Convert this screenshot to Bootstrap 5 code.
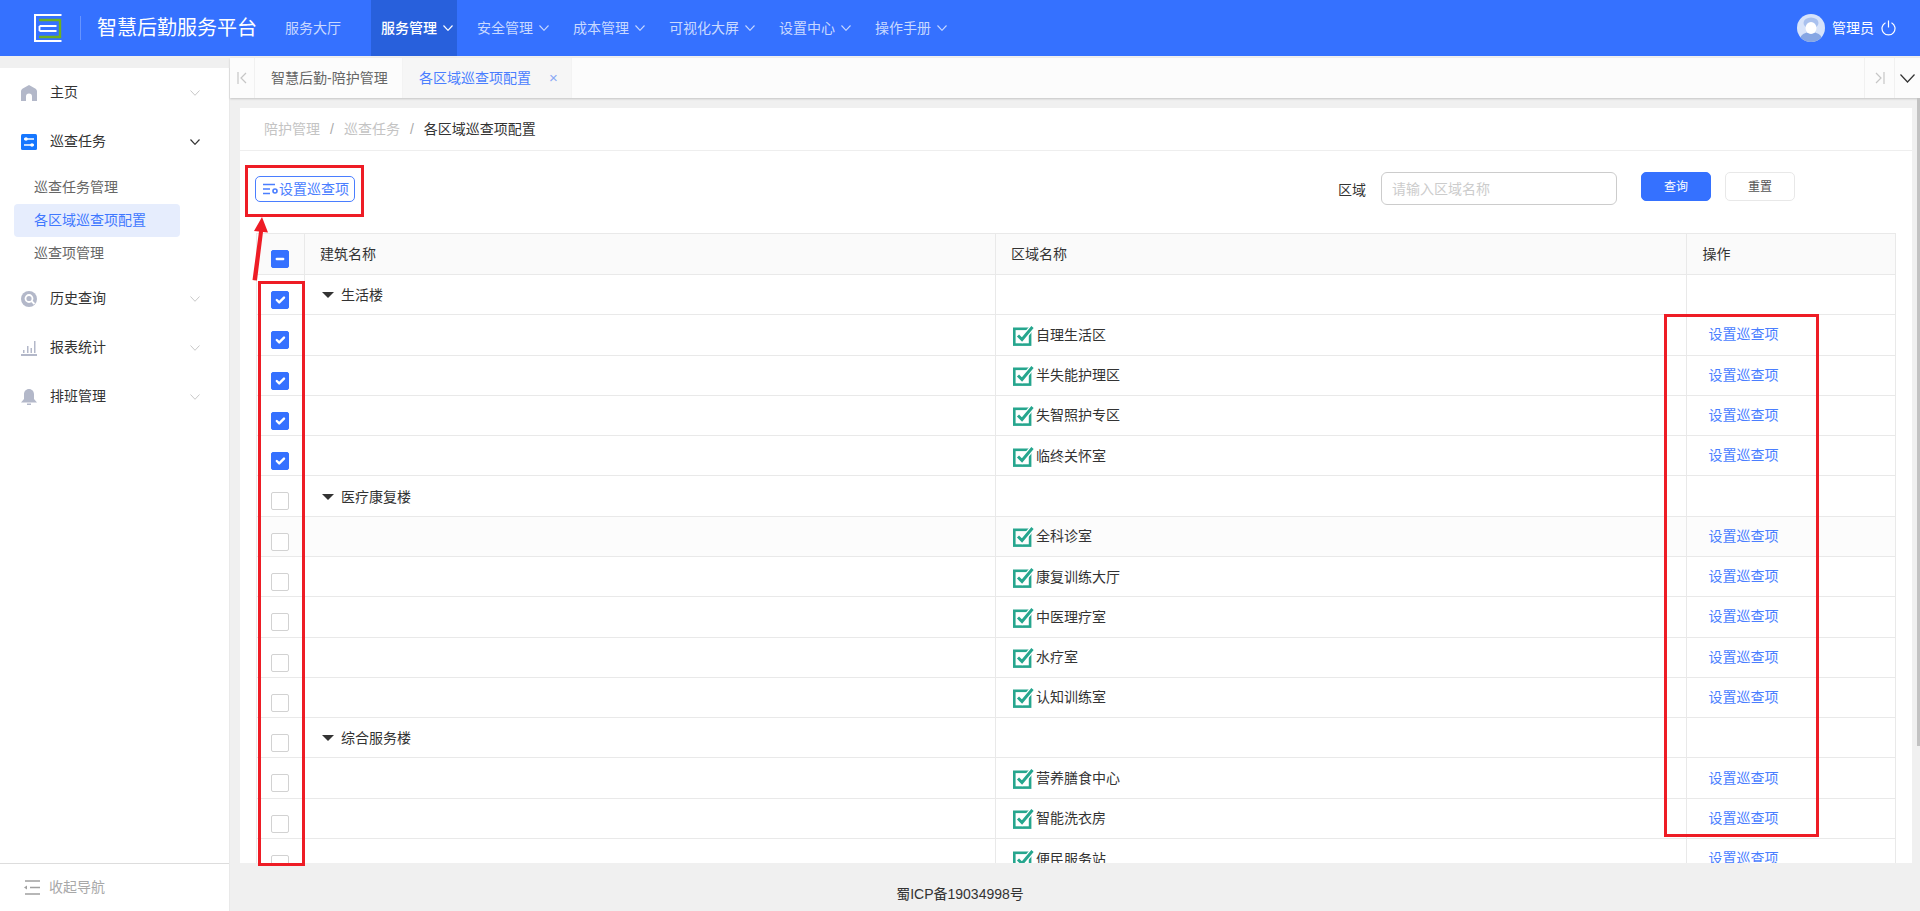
<!DOCTYPE html>
<html lang="zh-CN">
<head>
<meta charset="utf-8">
<title>智慧后勤服务平台</title>
<link href="https://cdn.jsdelivr.net/npm/bootstrap@5.3.0/dist/css/bootstrap.min.css" rel="stylesheet">
<style>
html,body{height:100%}
body{font-family:"Liberation Sans","Noto Sans CJK SC",sans-serif;font-size:14px;color:#333;background:#f0f0f0;overflow:hidden;position:relative}
.topbar{height:56px;background:#3571ff;flex-wrap:nowrap;justify-content:flex-start}
.logo-mark{width:28px;height:28px;margin-left:34px;flex:none}
.logo-sep{width:1px;height:24px;background:rgba(255,255,255,.25);margin:0 16px 0 18px}
.brand-name{font-size:20px;color:#fff;margin:0;padding:0;line-height:56px;width:178px;flex:none}
.topbar .navbar-nav{gap:10px}
.topbar .navbar-nav .nav-link{height:56px;padding:0 4px 0 10px;display:flex;align-items:center;gap:6px;color:#c9d9ff;font-size:14px}
.topbar .navbar-nav .nav-link.lead-link{padding-right:10px;margin-right:10px}
.topbar .navbar-nav .nav-link.active{background:#2860dc;color:#fff;font-weight:500}
.topbar .nav-link svg{width:10px;height:6px;flex:none}
.user-box{margin-left:auto;margin-right:24px;color:#fff;gap:7px}
.user-box svg{flex:none}
.workspace{height:calc(100vh - 56px)}
.side-panel{width:230px;flex:none;margin-top:12px;background:#fff;border-right:1px solid #e9e9e9}
.side-item{height:49px;padding:0 29px 0 21px;color:#333;gap:13px}
.side-item svg.glyph{width:16px;height:16px;flex:none}
.side-item svg.caret-line{width:10px;height:6px;margin-left:auto}
.side-sub{padding:5px 0 4px 14px}
.side-sub a{display:block;width:166px;height:33px;line-height:33px;padding-left:20px;color:#666;text-decoration:none;border-radius:4px}
.side-sub a.on{background:#e6edfd;color:#3f78ff}
.side-foot{height:48px;border-top:1px solid #ddd;padding-left:24px;color:#a8a8a8;gap:9px}
.main-pane{min-width:0}
.tab-strip{height:40px;margin-top:2px;background:#fcfcfc;box-shadow:0 1px 2px rgba(0,0,0,.18);position:relative;z-index:1;flex:none}
.tab-arrow{width:25px;flex:none;border-right:1px solid #f1f1f1;justify-content:center}
.tab-cell{padding-left:16px;color:#666;border-right:1px solid #f3f3f3}
.tab-cell.first{width:148px}
.tab-cell.current{width:169px;background:#f6f6f6;color:#4a7eff;position:relative}
.tab-close{position:absolute;left:146px;top:12px;font-size:15px;color:#8aa9f5;line-height:16px}
.tab-end{margin-left:auto;width:31px;flex:none;border-left:1px solid #f1f1f1;border-right:1px solid #f1f1f1;justify-content:center}
.tab-last{width:25px;flex:none;justify-content:center}
.scroller{flex:1 1 0;min-height:0;overflow:hidden;padding:10px 8px 0 10px}
.sheet{border-radius:0;height:1000px;--bs-card-border-width:0;background:#fff}
.crumbs{height:43px;padding-left:24px;border-bottom:1px solid #eee;--bs-breadcrumb-margin-bottom:0;--bs-breadcrumb-item-padding-x:10px;align-items:center;margin:0}
.crumbs .breadcrumb-item{color:#c4c4c4}
.crumbs .breadcrumb-item+.breadcrumb-item::before{color:#aaa}
.crumbs .breadcrumb-item.active{color:#333}
.tool-row{height:82px;padding:0 0 0 15px;position:relative}
.set-btn{height:26px;width:100px;margin-top:25px;padding:0 0 0 7px;font-size:14px;line-height:1;border:1px solid #4a7eff;color:#4a7eff;border-radius:5px;background:#fff;display:flex;align-items:center;justify-content:flex-start}
.set-btn svg{width:16px;height:12px}
.filter-row{margin-left:auto;margin-right:117px;padding-top:21px;align-items:flex-start}
.filter-label{margin:8px 15px 0 0;color:#333;font-size:14px}
.filter-input{width:236px;height:33px;border:1px solid #ccc;border-radius:6px;padding:0 10px;font-size:14px;box-shadow:none}
.filter-input::placeholder{color:#ccc}
.go-btn{width:70px;height:29px;padding:0;font-size:12px;border-radius:5px;margin-left:24px;background:#3571ff;border-color:#3571ff;color:#fff}
.clear-btn{width:70px;height:29px;padding:0;font-size:12px;border-radius:5px;margin-left:14px;background:#fff;border:1px solid #e8e8e8;color:#555}
.zone-table{width:1640px;margin:0 0 0 16px;table-layout:fixed;--bs-table-border-color:#e9e9e9;--bs-table-color:#333}
.zone-table.table>:not(caption)>*>*{padding:0;height:40.29px;vertical-align:middle;background:#fff;box-shadow:none;color:#333;font-weight:400}
.zone-table.table>thead>tr>th{background:#fafafa;height:41px;padding-left:15px}
.zone-table.table>thead>tr>th.op-head{padding-left:16px}
.zone-table.table>:not(caption)>*>.pick{padding:16px 2px 0 0;vertical-align:top;text-align:center}
.zone-table.table>thead>tr>th.pick{padding:16px 2px 0 0}
.zone-table.table>:not(caption)>*>.lined{padding-left:22px}
.zone-table.table>:not(caption)>*>.area{padding-left:17px}
.zone-table.table>:not(caption)>*>.group-cell{padding:2px 0 0 18px}
.zone-table.table>tbody>tr.soft>*{background:#fcfcfc}
.pick .form-check-input{width:18px;height:18px;margin:0 auto;display:block;border:1px solid #d2d2d2;border-radius:2px;--bs-form-check-bg:#fff}
.pick .form-check-input:checked,.pick .form-check-input:indeterminate{background-color:#3571ff;border-color:#3571ff}
.tri{display:inline-block;border-left:6px solid transparent;border-right:6px solid transparent;border-top:6px solid #333;margin-right:7px;margin-left:-1px;vertical-align:2px}
.area-wrap{gap:2px;line-height:20px}
.area-wrap svg{width:21px;height:20px;flex:none;margin:1px 0 -1px}
.act-link{color:#4a7eff;text-decoration:none}
.page-foot{height:48px;flex:none;padding-right:230px;padding-top:19px;text-align:center;line-height:24px;color:#333;background:#f0f0f0;position:relative}
.thumb{position:absolute;right:0;top:98px;width:3px;height:648px;background:#c2c2c2;z-index:2}
.note-box{position:absolute;border:3.5px solid #ee1c25;z-index:5;pointer-events:none}
.note-a{left:245px;top:165px;width:119px;height:52px}
.note-b{left:258px;top:281px;width:47px;height:585px}
.note-c{left:1664px;top:314px;width:155px;height:523px}
.note-arrow{position:absolute;left:245px;top:210px;width:30px;height:75px;z-index:5}
</style>
</head>
<body>
<svg width="0" height="0" class="position-absolute" aria-hidden="true">
  <symbol id="tick-box" viewBox="0 0 21 20" fill="none">
    <rect x="1.300" y="2.800" width="15.800" height="15.800" stroke="#26a68e" stroke-width="2.600"/>
    <path d="m5 9.500 4 4L19.500 1" stroke="#fff" stroke-width="5.500"/>
    <path d="m5 9.500 4 4L19.500 1" stroke="#26a68e" stroke-width="3"/>
  </symbol>
</svg>
<nav class="navbar navbar-expand p-0 topbar">
  <svg class="logo-mark" viewBox="0 0 28 28" fill="none">
    <path d="M27.500 1H1v26h26.500" stroke="#fff" stroke-width="2"/>
    <path d="M5 6h21v17H5" stroke="#6fb01e" stroke-width="2.400"/>
    <path d="M5.500 12h17M5.500 17h17M5.500 12v5" stroke="#fff" stroke-width="1.800"/>
  </svg>
  <span class="logo-sep"></span>
  <span class="navbar-brand brand-name">智慧后勤服务平台</span>
  <ul class="navbar-nav">
    <li class="nav-item"><a class="nav-link lead-link" href="#">服务大厅</a></li>
    <li class="nav-item"><a class="nav-link active" href="#">服务管理<svg viewBox="0 0 10 6" fill="none" stroke="#fff" stroke-width="1.200"><path d="M.5.500 5 5.300 9.500.5"/></svg></a></li>
    <li class="nav-item"><a class="nav-link" href="#">安全管理<svg viewBox="0 0 10 6" fill="none" stroke="#c9d9ff" stroke-width="1.100"><path d="M.5.500 5 5.300 9.500.5"/></svg></a></li>
    <li class="nav-item"><a class="nav-link" href="#">成本管理<svg viewBox="0 0 10 6" fill="none" stroke="#c9d9ff" stroke-width="1.100"><path d="M.5.500 5 5.300 9.500.5"/></svg></a></li>
    <li class="nav-item"><a class="nav-link" href="#">可视化大屏<svg viewBox="0 0 10 6" fill="none" stroke="#c9d9ff" stroke-width="1.100"><path d="M.5.500 5 5.300 9.500.5"/></svg></a></li>
    <li class="nav-item"><a class="nav-link" href="#">设置中心<svg viewBox="0 0 10 6" fill="none" stroke="#c9d9ff" stroke-width="1.100"><path d="M.5.500 5 5.300 9.500.5"/></svg></a></li>
    <li class="nav-item"><a class="nav-link" href="#">操作手册<svg viewBox="0 0 10 6" fill="none" stroke="#c9d9ff" stroke-width="1.100"><path d="M.5.500 5 5.300 9.500.5"/></svg></a></li>
  </ul>
  <div class="d-flex align-items-center user-box">
    <svg width="28" height="28" viewBox="0 0 28 28"><defs><clipPath id="av"><circle cx="14" cy="14" r="14"/></clipPath></defs><circle cx="14" cy="14" r="14" fill="#d7e3fa"/><g clip-path="url(#av)"><ellipse cx="14" cy="9" rx="7.500" ry="5.500" fill="#a9c1ee"/><ellipse cx="14" cy="25" rx="11" ry="7" fill="#86a6e3"/><ellipse cx="14" cy="14" rx="5.500" ry="6" fill="#fff"/></g></svg>
    <span>管理员</span>
    <svg width="15" height="16" viewBox="0 0 15 16" fill="none" stroke="#fff" stroke-width="1.200"><path d="M4.500 2.700a6.500 6.500 0 1 0 6 0M7.500.5v7"/></svg>
  </div>
</nav>

<div class="d-flex workspace">
  <aside class="side-panel d-flex flex-column">
    <div class="flex-grow-1">
      <div class="d-flex align-items-center side-item">
        <svg class="glyph" viewBox="0 0 16 16" fill="#b3b8c9"><path d="M8 0 1.800 3.600C.8 4.200 0 5.400 0 6.600V16h5v-4.500a3 3 0 0 1 6 0V16h5V6.600c0-1.200-.8-2.400-1.800-3z"/></svg>
        <span>主页</span>
        <svg class="caret-line" viewBox="0 0 10 6" fill="none" stroke="#c8c8c8"><path d="M.5.500 5 5.300 9.500.5"/></svg>
      </div>
      <div class="d-flex align-items-center side-item">
        <svg class="glyph" viewBox="0 0 16 16"><rect width="16" height="16" rx="1.500" fill="#1677ff"/><path d="M3 5h10M3 11h10" stroke="#fff" stroke-width="1.500"/><circle cx="5" cy="5" r="1.800" fill="#fff"/><circle cx="11" cy="11" r="1.800" fill="#fff"/></svg>
        <span>巡查任务</span>
        <svg class="caret-line" viewBox="0 0 10 6" fill="none" stroke="#333" stroke-width="1.200"><path d="M.5.500 5 5.300 9.500.5"/></svg>
      </div>
      <div class="side-sub">
        <a href="#">巡查任务管理</a>
        <a href="#" class="on">各区域巡查项配置</a>
        <a href="#">巡查项管理</a>
      </div>
      <div class="d-flex align-items-center side-item">
        <svg class="glyph" viewBox="0 0 16 16" fill="none"><circle cx="8" cy="8" r="8" fill="#b3b8c9"/><circle cx="8" cy="7.500" r="3.500" stroke="#fff" stroke-width="1.800"/><path d="m10.500 10 3 3" stroke="#fff" stroke-width="1.800"/></svg>
        <span>历史查询</span>
        <svg class="caret-line" viewBox="0 0 10 6" fill="none" stroke="#c8c8c8"><path d="M.5.500 5 5.300 9.500.5"/></svg>
      </div>
      <div class="d-flex align-items-center side-item">
        <svg class="glyph" viewBox="0 0 16 16" fill="#b3b8c9"><path d="M0 14h18v2H0zM2 10h1.500v3H2zM6 6h1.500v7H6zM9.500 8H11v5H9.500zM13 1h1.500v12H13z"/></svg>
        <span>报表统计</span>
        <svg class="caret-line" viewBox="0 0 10 6" fill="none" stroke="#c8c8c8"><path d="M.5.500 5 5.300 9.500.5"/></svg>
      </div>
      <div class="d-flex align-items-center side-item">
        <svg class="glyph" viewBox="0 0 16 16" fill="#b3b8c9"><path d="M8 0c3 0 5 2.300 5 5.500V10l3 3.500H0L3 10V5.500C3 2.300 5 0 8 0zM6 14.500h4V16H6z"/></svg>
        <span>排班管理</span>
        <svg class="caret-line" viewBox="0 0 10 6" fill="none" stroke="#c8c8c8"><path d="M.5.500 5 5.300 9.500.5"/></svg>
      </div>
    </div>
    <div class="d-flex align-items-center side-foot">
      <svg width="16" height="15" viewBox="0 0 16 15" fill="none" stroke="#a0a0a0" stroke-width="1.500"><path d="M1 1h15M6 7.500h10M1 14h15"/><path d="M0 7.500 3 5.500v4z" fill="#a0a0a0" stroke="none"/></svg>
      <span>收起导航</span>
    </div>
  </aside>

  <main class="main-pane flex-grow-1 d-flex flex-column">
    <div class="d-flex tab-strip">
      <div class="d-flex align-items-center tab-arrow">
        <svg width="10" height="12" viewBox="0 0 10 12" fill="none" stroke="#c6c6c6" stroke-width="1.200"><path d="M1 0v12M9 1 4 6l5 5"/></svg>
      </div>
      <div class="d-flex align-items-center tab-cell first">智慧后勤-陪护管理</div>
      <div class="d-flex align-items-center tab-cell current">各区域巡查项配置<span class="tab-close">×</span></div>
      <div class="d-flex align-items-center tab-end">
        <svg width="10" height="12" viewBox="0 0 10 12" fill="none" stroke="#c6c6c6" stroke-width="1.200"><path d="M9 0v12M1 1l5 5-5 5"/></svg>
      </div>
      <div class="d-flex align-items-center tab-last">
        <svg width="15" height="9" viewBox="0 0 15 9" fill="none" stroke="#333" stroke-width="1.200"><path d="m.5.500 7 7.500 7-7.500"/></svg>
      </div>
    </div>
    <div class="scroller">
      <div class="card sheet">
        <nav aria-label="breadcrumb">
          <ol class="breadcrumb crumbs">
            <li class="breadcrumb-item">陪护管理</li>
            <li class="breadcrumb-item">巡查任务</li>
            <li class="breadcrumb-item active" aria-current="page">各区域巡查项配置</li>
          </ol>
        </nav>
        <div class="d-flex tool-row">
          <button type="button" class="btn set-btn">
            <svg viewBox="0 0 16 12" fill="none" stroke="#4a7eff" stroke-width="1.300"><path d="M0 1.500h12M0 6h7M0 10.500h7"/><circle cx="12" cy="8" r="2" stroke-width="1.600"/></svg>设置巡查项
          </button>
          <div class="d-flex filter-row">
            <label class="form-label filter-label" for="qz">区域</label>
            <input id="qz" class="form-control filter-input" type="text" placeholder="请输入区域名称">
            <button type="button" class="btn go-btn">查询</button>
            <button type="button" class="btn clear-btn">重置</button>
          </div>
        </div>
        <table class="table table-bordered zone-table">
          <colgroup><col style="width:48px"><col style="width:691px"><col style="width:690.500px"><col></colgroup>
          <thead>
            <tr>
              <th class="pick"><input class="form-check-input" type="checkbox" id="allpick" aria-label="全选"></th>
              <th>建筑名称</th><th>区域名称</th><th class="op-head">操作</th>
            </tr>
          </thead>
          <tbody>
            <tr><td class="pick"><input class="form-check-input" type="checkbox" checked></td><td class="group-cell"><span class="tri"></span>生活楼</td><td></td><td></td></tr>
            <tr><td class="pick"><input class="form-check-input" type="checkbox" checked></td><td></td><td class="area"><div class="d-flex align-items-center area-wrap"><svg><use href="#tick-box"/></svg>自理生活区</div></td><td class="lined"><a class="act-link" href="#">设置巡查项</a></td></tr>
            <tr><td class="pick"><input class="form-check-input" type="checkbox" checked></td><td></td><td class="area"><div class="d-flex align-items-center area-wrap"><svg><use href="#tick-box"/></svg>半失能护理区</div></td><td class="lined"><a class="act-link" href="#">设置巡查项</a></td></tr>
            <tr><td class="pick"><input class="form-check-input" type="checkbox" checked></td><td></td><td class="area"><div class="d-flex align-items-center area-wrap"><svg><use href="#tick-box"/></svg>失智照护专区</div></td><td class="lined"><a class="act-link" href="#">设置巡查项</a></td></tr>
            <tr><td class="pick"><input class="form-check-input" type="checkbox" checked></td><td></td><td class="area"><div class="d-flex align-items-center area-wrap"><svg><use href="#tick-box"/></svg>临终关怀室</div></td><td class="lined"><a class="act-link" href="#">设置巡查项</a></td></tr>
            <tr><td class="pick"><input class="form-check-input" type="checkbox"></td><td class="group-cell"><span class="tri"></span>医疗康复楼</td><td></td><td></td></tr>
            <tr class="soft"><td class="pick"><input class="form-check-input" type="checkbox"></td><td></td><td class="area"><div class="d-flex align-items-center area-wrap"><svg><use href="#tick-box"/></svg>全科诊室</div></td><td class="lined"><a class="act-link" href="#">设置巡查项</a></td></tr>
            <tr><td class="pick"><input class="form-check-input" type="checkbox"></td><td></td><td class="area"><div class="d-flex align-items-center area-wrap"><svg><use href="#tick-box"/></svg>康复训练大厅</div></td><td class="lined"><a class="act-link" href="#">设置巡查项</a></td></tr>
            <tr><td class="pick"><input class="form-check-input" type="checkbox"></td><td></td><td class="area"><div class="d-flex align-items-center area-wrap"><svg><use href="#tick-box"/></svg>中医理疗室</div></td><td class="lined"><a class="act-link" href="#">设置巡查项</a></td></tr>
            <tr><td class="pick"><input class="form-check-input" type="checkbox"></td><td></td><td class="area"><div class="d-flex align-items-center area-wrap"><svg><use href="#tick-box"/></svg>水疗室</div></td><td class="lined"><a class="act-link" href="#">设置巡查项</a></td></tr>
            <tr><td class="pick"><input class="form-check-input" type="checkbox"></td><td></td><td class="area"><div class="d-flex align-items-center area-wrap"><svg><use href="#tick-box"/></svg>认知训练室</div></td><td class="lined"><a class="act-link" href="#">设置巡查项</a></td></tr>
            <tr><td class="pick"><input class="form-check-input" type="checkbox"></td><td class="group-cell"><span class="tri"></span>综合服务楼</td><td></td><td></td></tr>
            <tr><td class="pick"><input class="form-check-input" type="checkbox"></td><td></td><td class="area"><div class="d-flex align-items-center area-wrap"><svg><use href="#tick-box"/></svg>营养膳食中心</div></td><td class="lined"><a class="act-link" href="#">设置巡查项</a></td></tr>
            <tr><td class="pick"><input class="form-check-input" type="checkbox"></td><td></td><td class="area"><div class="d-flex align-items-center area-wrap"><svg><use href="#tick-box"/></svg>智能洗衣房</div></td><td class="lined"><a class="act-link" href="#">设置巡查项</a></td></tr>
            <tr><td class="pick"><input class="form-check-input" type="checkbox"></td><td></td><td class="area"><div class="d-flex align-items-center area-wrap"><svg><use href="#tick-box"/></svg>便民服务站</div></td><td class="lined"><a class="act-link" href="#">设置巡查项</a></td></tr>
          </tbody>
        </table>
      </div>
    </div>
    <footer class="page-foot">蜀ICP备19034998号</footer>
  </main>
</div>

<div class="thumb"></div>
<div class="note-box note-a"></div>
<div class="note-box note-b"></div>
<div class="note-box note-c"></div>
<svg class="note-arrow" viewBox="0 0 30 75" fill="#ee1c25"><path d="M17 7 9 21l5 .5-6.500 48.500 4.500.5 6-48.500 5 .5z"/></svg>

<script src="https://cdn.jsdelivr.net/npm/bootstrap@5.3.0/dist/js/bootstrap.bundle.min.js"></script>
<script>document.getElementById('allpick').indeterminate=true;</script>
</body>
</html>
